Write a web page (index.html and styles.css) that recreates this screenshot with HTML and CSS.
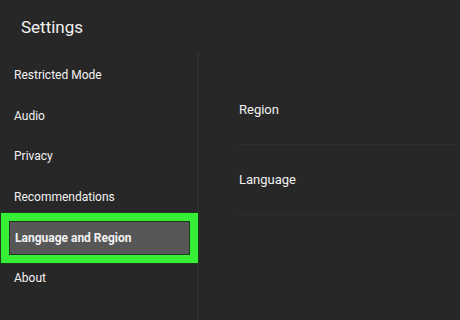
FILE: index.html
```html
<!DOCTYPE html>
<html lang="en">
<head>
  <meta charset="UTF-8" />
  <meta name="viewport" content="width=device-width, initial-scale=1.0" />
  <title>Settings</title>
  <link rel="stylesheet" href="styles.css">
</head>
<body>
  <header class="topbar">Settings</header>
  <div class="main">
    <nav class="sidebar">
      <div class="nav-item">Restricted Mode</div>
      <div class="nav-item">Audio</div>
      <div class="nav-item">Privacy</div>
      <div class="nav-item">Recommendations</div>
      <div class="nav-item active">Language and Region</div>
      <div class="nav-item">About</div>
    </nav>
    <section class="content">
      <div class="row">Region</div>
      <div class="row">Language</div>
    </section>
  </div>
</body>
</html>
```

FILE: styles.css
```css
html, body {
  height: 100%;
}
body {
  margin: 0;
  background: #272727;
  color: #f2f2f2;
  font-family: Roboto, 'Liberation Sans', sans-serif;
  overflow: hidden;
}
.topbar {
  height: 52px;
  display: flex;
  align-items: center;
  padding-left: 21px;
  font-size: 17px;
  box-sizing: border-box;
  padding-top: 2px;
}
.main {
  display: flex;
  height: calc(100% - 52px);
}
.sidebar {
  width: 197px;
  border-right: 2px solid #2e2e2e;
  padding-top: 3px;
  flex-shrink: 0;
}
.nav-item {
  height: 40.6px;
  display: flex;
  align-items: center;
  padding-left: 14px;
  font-size: 12px;
  box-sizing: border-box;
}
.nav-item.active {
  height: 33.6px;
  margin: 4px 7px 3px 9px;
  padding-left: 5px;
  background: #575757;
  border: 1px solid #1d3a1d;
  font-weight: bold;
  outline: 8px solid #36ee36;
  box-shadow: 0 0 0 9px #1d3a1d;
}
.content {
  flex: 1;
  padding-top: 23px;
  padding-left: 40px;
}
.row {
  height: 70px;
  display: flex;
  align-items: center;
  border-bottom: 1px solid #2f2f2f;
  font-size: 13px;
  box-sizing: border-box;
}
```
